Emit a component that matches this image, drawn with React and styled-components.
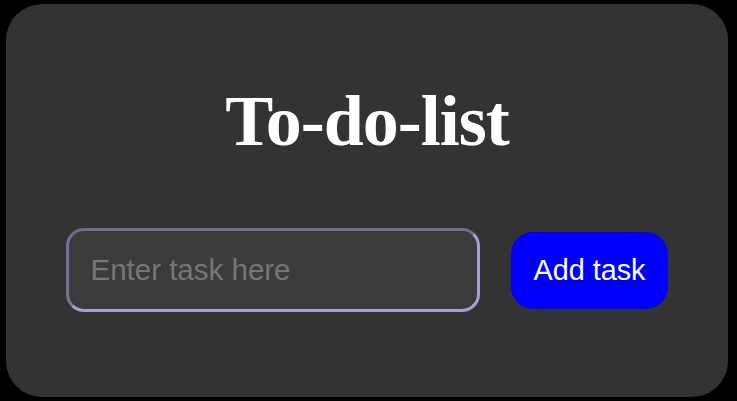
import React from 'react';
import styled, { createGlobalStyle } from 'styled-components';

const GlobalStyle = createGlobalStyle`
	html, body {
		margin: 0;
		padding: 0;
		background: #000;
	}
`;

const App = () => {
	return (
		<>
			<GlobalStyle />
			<Page>
				<Card>
					<Titre>To-do-list</Titre>
					<Ligne>
						<ChampTache type="text" placeholder="Enter task here" />
						<BoutonAjout>Add task</BoutonAjout>
					</Ligne>
				</Card>
			</Page>
		</>
	);
};

export default App;

const Page = styled.main`
	padding: 4px 9px 4px 6px;
`;

const Card = styled.section`
	box-sizing: border-box;
	width: 722px;
	height: 393px;
	background: #333333;
	border-radius: 36px;
	padding-top: 76px;
	display: flex;
	flex-direction: column;
	align-items: center;
`;

const Titre = styled.h1`
	margin: 0;
	font-family: 'Liberation Serif', 'Times New Roman', serif;
	font-weight: 700;
	font-size: 72px;
	letter-spacing: -1px;
	color: #ffffff;
`;

const Ligne = styled.div`
	margin-top: 65px;
	display: flex;
	align-items: center;
	gap: 31px;
`;

const ChampTache = styled.input`
	box-sizing: border-box;
	width: 414px;
	height: 84px;
	padding: 0 21px;
	background: #3b3b3b;
	border: 3px solid;
	border-color: #6e6e90 #a2a2d2 #a2a2d2 #74749a;
	border-radius: 18px;
	font-family: 'Liberation Sans', Arial, sans-serif;
	font-size: 29.5px;
	color: #dddddd;
	outline: none;
	&::placeholder {
		color: #777777;
	}
`;

const BoutonAjout = styled.button`
	box-sizing: border-box;
	height: 77px;
	padding: 0 22px;
	background: #0000ff;
	border: none;
	border-radius: 22px;
	font-family: 'Liberation Sans', Arial, sans-serif;
	font-size: 28.8px;
	color: #ffffff;
	cursor: pointer;
`;
